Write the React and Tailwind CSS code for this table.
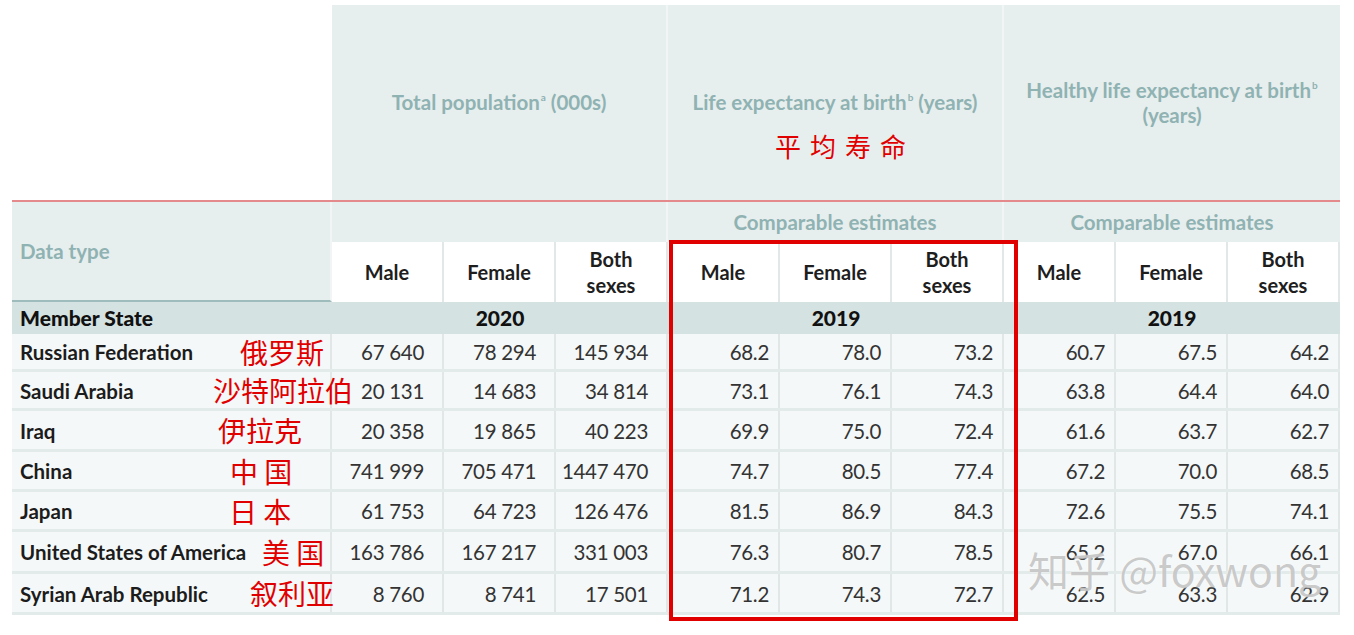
import React from "react";

const rows = [
  { name: "Russian Federation", zh: "俄罗斯", zx: "left-[228px]", h: "h-[38px]", v: ["67 640", "78 294", "145 934", "68.2", "78.0", "73.2", "60.7", "67.5", "64.2"] },
  { name: "Saudi Arabia", zh: "沙特阿拉伯", zx: "left-[201px]", h: "h-[39px]", v: ["20 131", "14 683", "34 814", "73.1", "76.1", "74.3", "63.8", "64.4", "64.0"] },
  { name: "Iraq", zh: "伊拉克", zx: "left-[206px]", h: "h-[41px]", v: ["20 358", "19 865", "40 223", "69.9", "75.0", "72.4", "61.6", "63.7", "62.7"] },
  { name: "China", zh: "中 国", zx: "left-[218px]", h: "h-[40px]", v: ["741 999", "705 471", "1447 470", "74.7", "80.5", "77.4", "67.2", "70.0", "68.5"] },
  { name: "Japan", zh: "日 本", zx: "left-[217px]", h: "h-[40px]", v: ["61 753", "64 723", "126 476", "81.5", "86.9", "84.3", "72.6", "75.5", "74.1"] },
  { name: "United States of America", zh: "美 国", zx: "left-[250px]", h: "h-[42px]", v: ["163 786", "167 217", "331 003", "76.3", "80.7", "78.5", "65.2", "67.0", "66.1"] },
  { name: "Syrian Arab Republic", zh: "叙利亚", zx: "left-[238px]", h: "h-[41px]", v: ["8 760", "8 741", "17 501", "71.2", "74.3", "72.7", "62.5", "63.3", "62.9"] },
];

const zhFont = "font-['Noto_Sans_CJK_SC',sans-serif] font-normal";

function SubHead({ label }) {
  if (label === "Both") {
    return (
      <div className="bg-white border-r-2 border-[#e2e8e8] flex flex-col items-center justify-center leading-[26px] font-bold text-[20px] text-[#1e1e1e]">
        <span>Both</span>
        <span>sexes</span>
      </div>
    );
  }
  return (
    <div className="bg-white border-r-2 border-[#e2e8e8] flex items-center justify-center font-bold text-[20px] text-[#1e1e1e]">
      {label}
    </div>
  );
}

const teal = "text-[20.5px] font-bold text-[#8fb2b2]";
const sup = "text-[10px] leading-none relative -top-[9px] align-baseline ml-[1px]";

export default function App() {
  const grid = "grid grid-cols-[320px_repeat(9,112px)]";
  return (
    <div className="relative w-[1354px] h-[635px] bg-white overflow-hidden font-['Lato',sans-serif]">
      <div className="pl-3 pt-[5px] w-[1340px]">
        {/* Top headers */}
        <div className="grid grid-cols-[320px_336px_336px_336px] h-[195px]">
          <div className="bg-white" />
          <div className={`bg-[#e7eeee] border-r-2 border-[#f1f5f5] flex items-center justify-center ${teal}`}>
            <span>
              Total population<span className={sup}>a</span> (000s)
            </span>
          </div>
          <div className={`relative bg-[#e7eeee] border-r-2 border-[#f1f5f5] flex items-center justify-center ${teal}`}>
            <span>
              Life expectancy at birth<span className={sup}>b</span> (years)
            </span>
            <span className={`absolute left-[107px] top-[128px] text-[26px] leading-none tracking-[9px] text-[#e00000] ${zhFont}`}>
              平均寿命
            </span>
          </div>
          <div className={`bg-[#e7eeee] flex flex-col items-center justify-center text-center leading-[25px] ${teal}`}>
            <div className="h-[25px]">
              Healthy life expectancy at birth<span className={sup}>b</span>
            </div>
            <div className="h-[25px]">(years)</div>
          </div>
        </div>

        {/* red rule */}
        <div className="h-[2px] w-[1328px] bg-[#e58a8c]" />

        {/* sub header */}
        <div className={`${grid} grid-rows-[40px_60px] bg-[#e7eeee]`}>
          <div className={`row-span-2 bg-[#e7eeee] border-r-2 border-[#f1f5f5] border-b-2 border-b-[#9fbcbc] flex items-center pl-2 ${teal}`}>
            Data type
          </div>
          <div className="col-span-3 border-r-2 border-[#f1f5f5]" />
          <div className={`col-span-3 border-r-2 border-[#f1f5f5] flex items-center justify-center ${teal}`}>
            Comparable estimates
          </div>
          <div className={`col-span-3 flex items-center justify-center ${teal}`}>
            Comparable estimates
          </div>
          {["Male", "Female", "Both", "Male", "Female", "Both", "Male", "Female", "Both"].map((l, i) => (
            <SubHead key={i} label={l} />
          ))}
        </div>

        {/* Member State row */}
        <div className={`${grid} h-[32px] bg-[#d5e2e2] text-[21px] font-black text-[#111]`}>
          <div className="flex items-center pl-2">Member State</div>
          <div className="col-span-3 flex items-center justify-center">2020</div>
          <div className="col-span-3 flex items-center justify-center">2019</div>
          <div className="col-span-3 flex items-center justify-center">2019</div>
        </div>

        {/* Data rows */}
        {rows.map((r, ri) => (
          <div key={ri} className={`${grid} ${r.h} bg-[#f5f8f8] border-b-[3px] border-[#e3eaea]`}>
            <div className="relative flex items-center pl-2 pt-[2px] border-r-2 border-[#e1e7e7] text-[20.5px] font-bold text-[#1c1c1c] whitespace-nowrap">
              {r.name}
              <span className={`absolute ${r.zx} top-1/2 -translate-y-1/2 text-[28px] leading-none text-[#e00000] ${zhFont}`}>
                {r.zh}
              </span>
            </div>
            {r.v.map((v, vi) => (
              <div
                key={vi}
                className={`flex items-center justify-end pt-[2px] border-r-2 border-[#e1e7e7] text-[20.5px] tracking-[-0.3px] text-[#333] ${vi < 3 ? "pr-[18px]" : "pr-[9px]"}`}
              >
                {v}
              </div>
            ))}
          </div>
        ))}
      </div>

      {/* red highlight box */}
      <div className="absolute left-[669px] top-[240px] w-[349px] h-[381px] border-4 border-[#e00000] pointer-events-none" />

      {/* watermark */}
      <div
        className={`absolute left-[1028px] top-[549px] text-[41px] leading-none text-[rgba(185,185,185,0.75)] ${zhFont}`}
        style={{ textShadow: "0 0 2px rgba(255,255,255,0.9)" }}
      >
        知乎 @foxwong
      </div>
    </div>
  );
}
